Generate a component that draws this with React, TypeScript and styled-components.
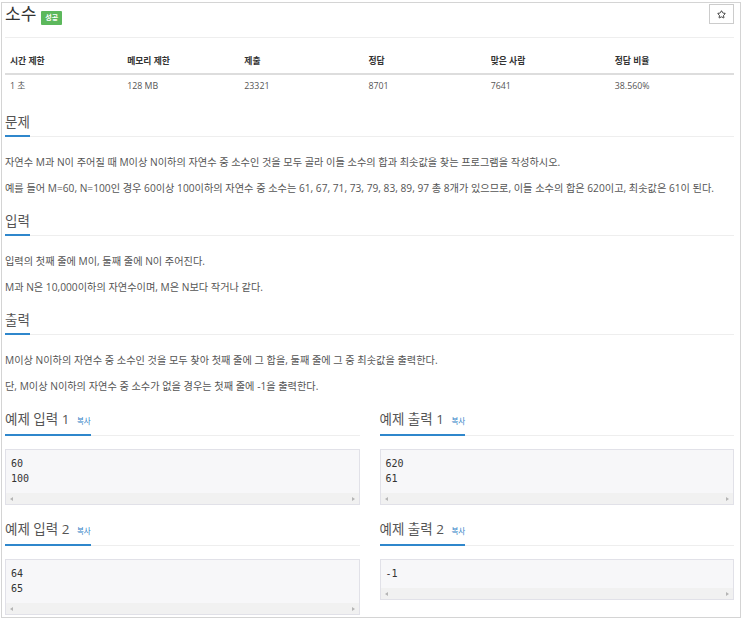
import React from "react";
import styled, { createGlobalStyle } from "styled-components";
import { Star } from "lucide-react";

const GlobalStyle = createGlobalStyle`
  body {
    margin: 0;
    background: #fff;
    font-family: "Open Sans", "Noto Sans CJK KR", sans-serif;
  }
`;

const Frame = styled.div`
  box-sizing: border-box;
  width: 740px;
  margin: 2px 0 0 1px;
  padding: 0 6px 2px 3px;
  border: 1px solid #d4d4d4;
`;

const TitleRow = styled.div`
  box-sizing: border-box;
  display: flex;
  align-items: flex-start;
  height: 35px;
  border-bottom: 1px solid #eee;
`;

const Title = styled.h1`
  margin: 0;
  font-size: 17px;
  line-height: 22px;
  font-weight: 400;
  color: #333;
`;

const Badge = styled.span`
  margin: 8px 0 0 5px;
  height: 14px;
  padding: 0 4px;
  font-size: 7px;
  line-height: 14px;
  font-weight: 700;
  color: #fff;
  background: #5cb85c;
  border-radius: 1px;
`;

const StarButton = styled.button`
  box-sizing: border-box;
  margin: 1px 0 0 auto;
  width: 25px;
  height: 20px;
  padding: 0;
  display: flex;
  align-items: center;
  justify-content: center;
  background: #fff;
  border: 1px solid #ccc;
  color: #333;
`;

const InfoTable = styled.table`
  width: 100%;
  table-layout: fixed;
  border-collapse: collapse;
  margin: 11px 0 5px;
  font-size: 8.8px;

  th {
    text-align: left;
    padding: 6px 5px;
    line-height: 12px;
    font-weight: 700;
    color: #333;
    border-bottom: 2px solid #ddd;
  }

  td {
    padding: 5px;
    line-height: 12px;
    color: #555;
  }
`;

const Section = styled.section`
  margin-top: 13px;
`;

const HeadlineWrap = styled.div<{ $gap?: number }>`
  border-bottom: 1px solid #eee;
  margin-bottom: ${(p) => p.$gap ?? 17}px;
`;

const Headline = styled.h2`
  display: inline-block;
  margin: 0 0 -1px;
  padding-bottom: 3px;
  font-size: 13.5px;
  line-height: 20px;
  font-weight: 400;
  color: #555;
  border-bottom: 2px solid #2f87cc;
`;

const CopyLink = styled.a`
  margin-left: 4px;
  font-size: 7.5px;
  color: #2f7fc6;
  text-decoration: none;
`;

const Para = styled.p`
  margin: 0 0 10px;
  font-size: 10.2px;
  line-height: 16px;
  color: #555;

  &:last-child {
    margin-bottom: 0;
  }
`;

const SampleGrid = styled.div<{ $top: number }>`
  display: grid;
  grid-template-columns: 1fr 1fr;
  column-gap: 20px;
  margin-top: ${(p) => p.$top}px;
`;

const SampleBox = styled.div`
  background: #f7f7f9;
  border: 1px solid #e1e1e8;
`;

const Code = styled.pre`
  margin: 0;
  padding: 6px 5px 7px;
  font-family: "DejaVu Sans Mono", monospace;
  font-size: 10px;
  line-height: 15px;
  color: #333;
`;

const ScrollBar = styled.div`
  height: 11px;
  background: #f1f1f1;
  display: flex;
  align-items: center;
  justify-content: space-between;
  padding: 0 4px;
`;

const Arrow = styled.span<{ $dir: "left" | "right" }>`
  width: 0;
  height: 0;
  border-top: 2px solid transparent;
  border-bottom: 2px solid transparent;
  ${(p) =>
    p.$dir === "left"
      ? "border-right: 3px solid #b5b5b5;"
      : "border-left: 3px solid #b5b5b5;"}
`;

const stats = [
  ["시간 제한", "1 초"],
  ["메모리 제한", "128 MB"],
  ["제출", "23321"],
  ["정답", "8701"],
  ["맞은 사람", "7641"],
  ["정답 비율", "38.560%"],
];
const colWidths = [117, 117, 124, 122, 124, 124];

const Sample = ({ title, data }: { title: string; data: string }) => (
  <div>
    <HeadlineWrap $gap={13}>
      <Headline>
        {title}
        <CopyLink href="#">복사</CopyLink>
      </Headline>
    </HeadlineWrap>
    <SampleBox>
      <Code>{data}</Code>
      <ScrollBar>
        <Arrow $dir="left" />
        <Arrow $dir="right" />
      </ScrollBar>
    </SampleBox>
  </div>
);

export default function App() {
  return (
    <>
      <GlobalStyle />
      <Frame>
        <TitleRow>
          <Title>소수</Title>
          <Badge>성공</Badge>
          <StarButton>
            <Star size={9} strokeWidth={2.5} />
          </StarButton>
        </TitleRow>

        <InfoTable>
          <colgroup>
            {colWidths.map((w, i) => (
              <col key={i} style={{ width: w }} />
            ))}
          </colgroup>
          <thead>
            <tr>
              {stats.map(([h]) => (
                <th key={h}>{h}</th>
              ))}
            </tr>
          </thead>
          <tbody>
            <tr>
              {stats.map(([h, v]) => (
                <td key={h}>{v}</td>
              ))}
            </tr>
          </tbody>
        </InfoTable>

        <Section>
          <HeadlineWrap>
            <Headline>문제</Headline>
          </HeadlineWrap>
          <Para>
            자연수 M과 N이 주어질 때 M이상 N이하의 자연수 중 소수인 것을 모두 골라 이들 소수의 합과 최솟값을 찾는
            프로그램을 작성하시오.
          </Para>
          <Para>
            예를 들어 M=60, N=100인 경우 60이상 100이하의 자연수 중 소수는 61, 67, 71, 73, 79, 83, 89, 97 총 8개가
            있으므로, 이들 소수의 합은 620이고, 최솟값은 61이 된다.
          </Para>
        </Section>

        <Section>
          <HeadlineWrap>
            <Headline>입력</Headline>
          </HeadlineWrap>
          <Para>입력의 첫째 줄에 M이, 둘째 줄에 N이 주어진다.</Para>
          <Para>M과 N은 10,000이하의 자연수이며, M은 N보다 작거나 같다.</Para>
        </Section>

        <Section>
          <HeadlineWrap>
            <Headline>출력</Headline>
          </HeadlineWrap>
          <Para>M이상 N이하의 자연수 중 소수인 것을 모두 찾아 첫째 줄에 그 합을, 둘째 줄에 그 중 최솟값을 출력한다.</Para>
          <Para>단, M이상 N이하의 자연수 중 소수가 없을 경우는 첫째 줄에 -1을 출력한다.</Para>
        </Section>

        <SampleGrid $top={13}>
          <Sample title="예제 입력 1 " data={"60\n100"} />
          <Sample title="예제 출력 1 " data={"620\n61"} />
        </SampleGrid>

        <SampleGrid $top={12}>
          <Sample title="예제 입력 2 " data={"64\n65"} />
          <Sample title="예제 출력 2 " data={"-1"} />
        </SampleGrid>
      </Frame>
    </>
  );
}
